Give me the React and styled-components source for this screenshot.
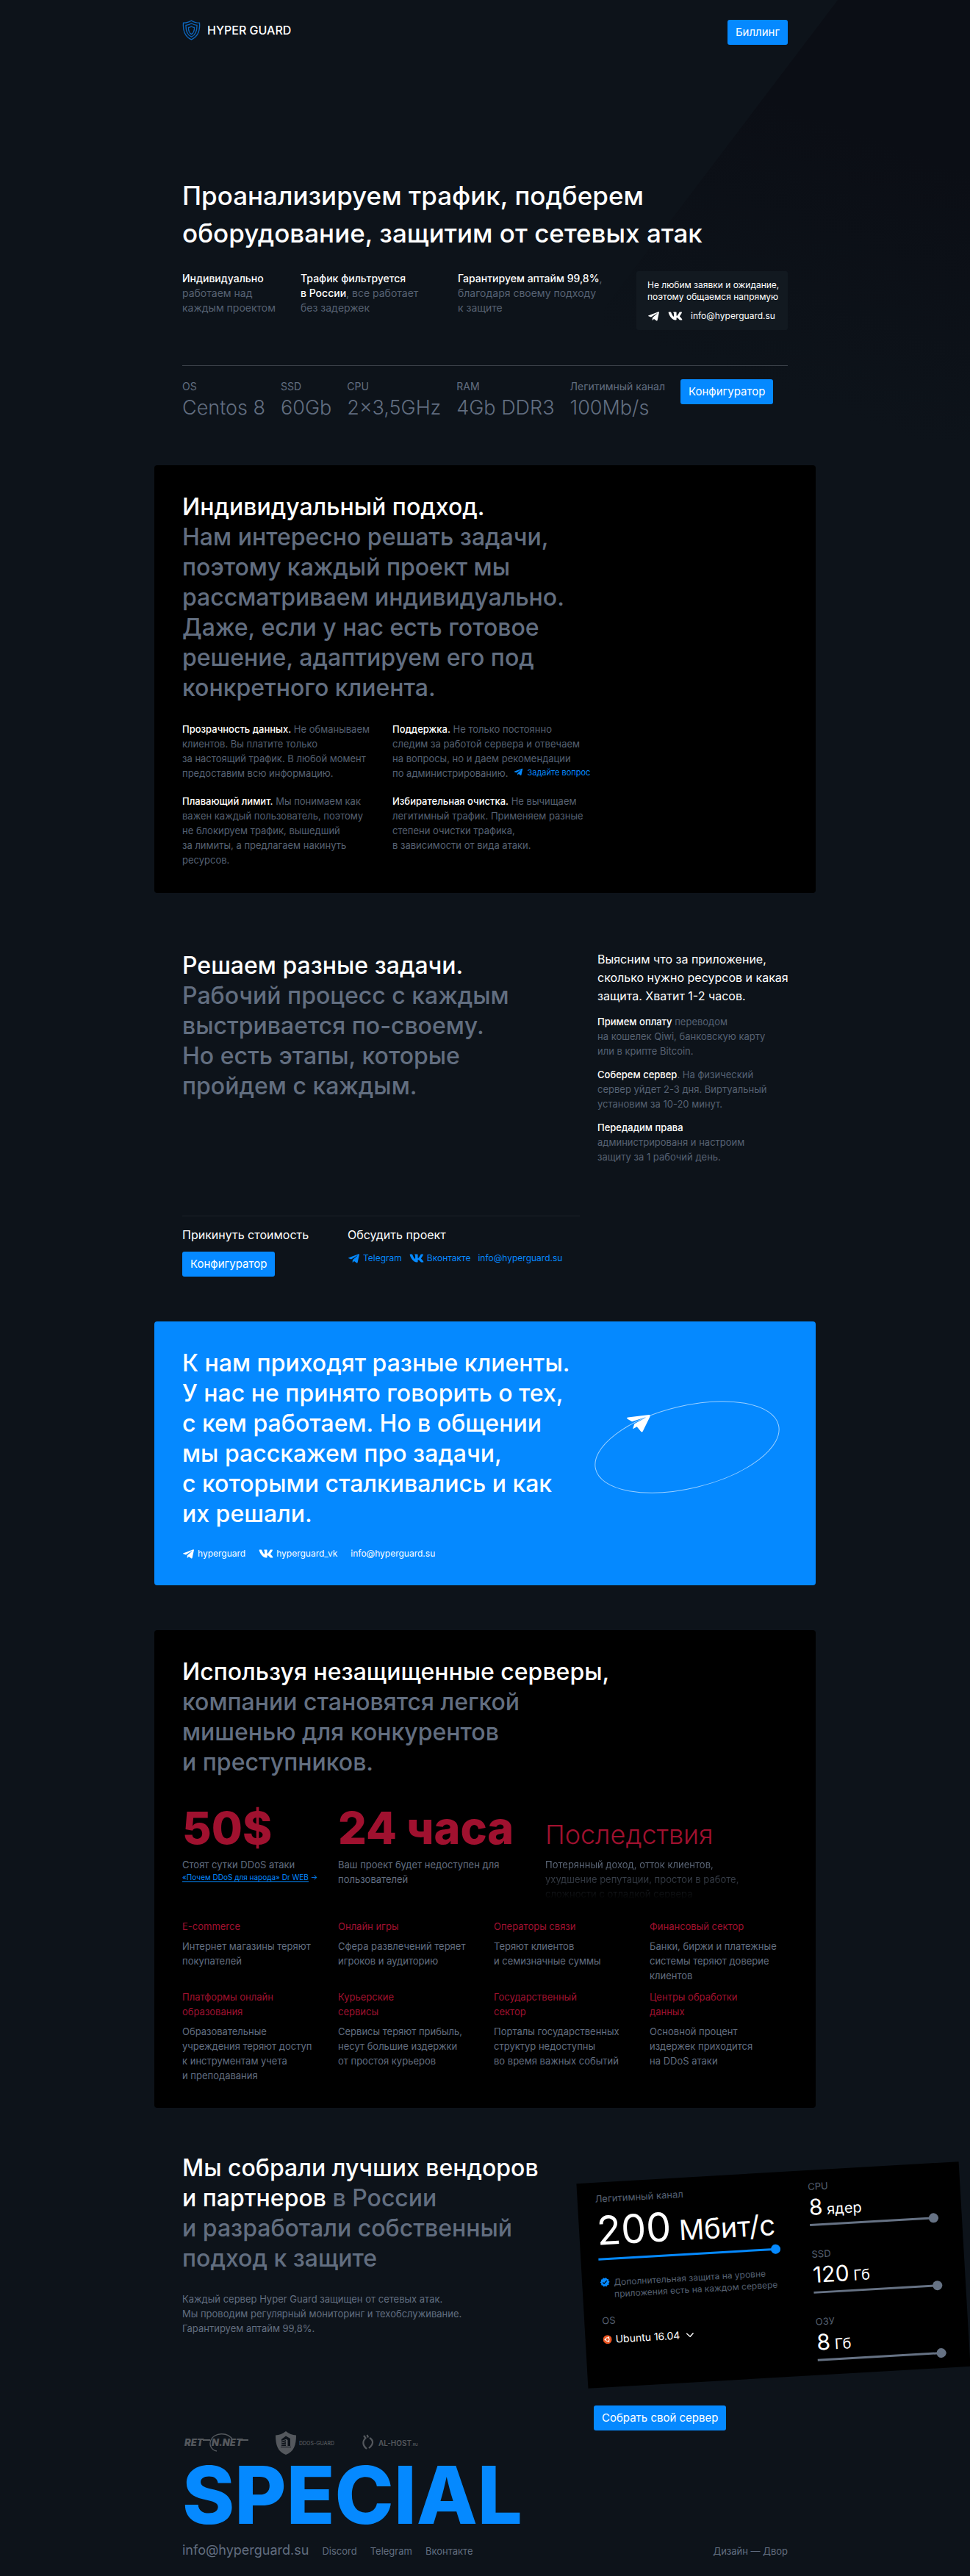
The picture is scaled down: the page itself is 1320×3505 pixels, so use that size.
import React from "react";
import styled, { createGlobalStyle } from "styled-components";
import { FaTelegramPlane, FaVk } from "react-icons/fa";
import { MdVerified } from "react-icons/md";
import { FiChevronDown } from "react-icons/fi";

const color = {
  page: "#0d131a",
  panel: "#000000",
  card: "#121920",
  blue: "#0589ff",
  text: "#ffffff",
  muted: "#626e80",
  soft: "#566172",
  red: "#a0112f",
  line: "#3d434b",
};

const GlobalStyle = createGlobalStyle`
  *, *::before, *::after { box-sizing: border-box; }
  body {
    margin: 0;
    background: ${color.page};
    color: ${color.text};
    font-family: Inter, "Noto Sans", sans-serif;
    font-size: 13px;
    line-height: 20px;
  }
  h1, h2, h3, p, dl, dt, dd { margin: 0; font-weight: inherit; font-size: inherit; }
  a { color: inherit; text-decoration: none; }
  button, select, input { font: inherit; }
`;

const Page = styled.div`
  position: relative;
  overflow: hidden;
`;

const Wedge = styled.div`
  position: absolute;
  top: 0;
  right: 0;
  width: 500px;
  height: 600px;
  clip-path: polygon(320px 0, 100% 0, 100% 100%, 0 100%, 0 422px);
  background: linear-gradient(200deg, #0b0e15 30%, ${color.page} 80%);
`;

const Shell = styled.div`
  position: relative;
  max-width: 900px;
  margin: 0 auto;
`;

const Section = styled.section`
  padding: 0 38px;
`;

const Panel = styled.section`
  margin-top: ${(p) => p.$gap || 61}px;
  padding: 36px 38px ${(p) => p.$bottom || 35}px;
  border-radius: 4px;
  background: ${(p) => (p.$blue ? color.blue : color.panel)};
`;

const Header = styled.header`
  display: flex;
  justify-content: space-between;
  align-items: flex-start;
  padding: 27px 38px 0;
`;

const Brand = styled.a`
  display: flex;
  align-items: center;
  gap: 9px;
  font-size: 16px;
  font-weight: 500;
`;

const Button = styled.button`
  height: 34px;
  padding: 0 11px;
  border: 0;
  border-radius: 3px;
  background: ${color.blue};
  color: ${color.text};
  font-size: 15px;
  font-weight: 400;
  line-height: 20px;
  white-space: nowrap;
  cursor: pointer;
`;

const HeroTitle = styled.h1`
  margin-top: 180px;
  font-size: 35px;
  font-weight: 500;
  line-height: 51px;
  white-space: pre-line;
`;

const Title = styled.h2`
  font-size: 32px;
  font-weight: 500;
  line-height: 41px;
  color: ${(p) => (p.$bright ? color.text : color.muted)};
  white-space: pre-line;
`;

const Bright = styled.span`
  color: ${color.text};
  font-weight: 500;
`;

const Features = styled.div`
  display: grid;
  grid-template-columns: 161px 214px 1fr 206px;
  margin-top: 26px;
  color: ${color.soft};
  font-size: 14px;
  white-space: pre-line;
`;

const ContactCard = styled.div`
  height: 80px;
  padding: 11px 15px;
  border-radius: 3px;
  background: ${color.card};
  color: ${color.text};
  font-size: 12px;
  line-height: 16px;
  white-space: pre;
`;

const Contacts = styled.div`
  display: flex;
  align-items: center;
  gap: ${(p) => p.$gap}px;
  height: 16px;
  margin-top: ${(p) => p.$top}px;
  color: ${(p) => (p.$blue ? color.blue : color.text)};
  font-size: 12px;
  line-height: 16px;
  white-space: nowrap;
`;

const ContactLink = styled.a`
  display: inline-flex;
  align-items: center;
  gap: 4px;
`;

const Specs = styled.div`
  display: flex;
  align-items: flex-start;
  gap: 21px;
  margin-top: 48px;
  padding-top: 18px;
  border-top: 1px solid ${color.line};
`;

const SpecList = styled.dl`
  display: flex;
  gap: 21px;
  color: ${color.muted};
  white-space: nowrap;
`;

const SpecName = styled.dt`
  font-size: 14px;
  line-height: 20px;
`;

const SpecValue = styled.dd`
  margin-top: 3px;
  font-size: 27px;
  font-weight: 300;
  line-height: 32px;
`;

const Notes = styled.div`
  display: grid;
  grid-template-columns: 286px 1fr;
  row-gap: 18px;
  margin-top: 26px;
  color: ${color.soft};
  white-space: pre-line;
`;

const AskLink = styled.a`
  display: inline-flex;
  align-items: center;
  gap: 5px;
  margin-left: 8px;
  color: ${color.blue};
  font-size: 11px;
  line-height: 16px;
`;

const Tasks = styled.section`
  display: grid;
  grid-template-columns: 541px 1fr;
  column-gap: 24px;
  margin-top: 78px;
  padding: 0 38px;
`;

const TasksMain = styled.div`
  display: flex;
  flex-direction: column;
  gap: 156px;
`;

const Actions = styled.div`
  display: grid;
  grid-template-columns: 225px 1fr;
  padding-top: 13px;
  border-top: 1px solid #1b2027;
`;

const ActionTitle = styled.h3`
  margin-bottom: 11px;
  font-size: 16px;
  line-height: 24px;
`;

const Steps = styled.div`
  display: flex;
  flex-direction: column;
  gap: 12px;
  color: ${color.soft};
  white-space: pre;
`;

const Lead = styled.p`
  color: ${color.text};
  font-size: 16px;
  line-height: 25px;
`;

const ClientsBody = styled.div`
  display: grid;
  grid-template-columns: 1fr 252px;
  column-gap: 20px;
  align-items: center;
  padding-right: 11px;
`;

const OrbitBox = styled.div`
  padding-top: 24px;
  svg { display: block; }
`;

const Figures = styled.div`
  display: grid;
  grid-template-columns: 212px 282px 1fr;
  align-items: baseline;
  row-gap: 8px;
  margin-top: 37px;
  color: ${color.muted};
  white-space: pre-line;
`;

const Figure = styled.p`
  color: ${color.red};
  font-size: ${(p) => (p.$light ? 36 : 61)}px;
  font-weight: ${(p) => (p.$light ? 300 : 800)};
  line-height: ${(p) => (p.$light ? 40 : 64)}px;
`;

const Faded = styled.p`
  mask-image: linear-gradient(#000 10%, transparent 95%);
`;

const SourceLink = styled.a`
  display: block;
  color: ${color.blue};
  font-size: 10px;
  line-height: 14px;
  white-space: nowrap;
  span { border-bottom: 1px solid ${color.blue}; }
`;

const Sectors = styled.div`
  display: grid;
  grid-template-columns: repeat(3, 212px) 1fr;
  row-gap: 9px;
  margin-top: 24px;
  color: ${color.muted};
  white-space: pre-line;
`;

const SectorName = styled.h3`
  margin-bottom: 7px;
  color: ${color.red};
`;

const Partners = styled.section`
  display: grid;
  grid-template-columns: 544px 521px;
  margin-top: 61px;
  padding-left: 38px;
  white-space: pre-line;
`;

const PartnersText = styled.p`
  margin-top: 25px;
  color: ${color.muted};
`;

const ServerCard = styled.form`
  display: grid;
  grid-template-columns: 248px 175px;
  column-gap: 42px;
  height: 279px;
  margin: 27px 0 38px;
  padding: 14px 24px;
  background: ${color.panel};
  transform: rotate(-3.3deg);
`;

const BuildRow = styled.div`
  padding-left: 16px;
`;

const Control = styled.label`
  display: flex;
  flex-direction: column;
  color: ${color.soft};
  line-height: 16px;
  white-space: nowrap;
`;

const Reading = styled.span`
  margin: ${(p) => (p.$big ? "6px 0 2px" : "4px 0 2px")};
  color: ${color.text};
  font-size: ${(p) => (p.$big ? 54 : 30)}px;
  line-height: ${(p) => (p.$big ? 60 : 32)}px;
  small { font-size: ${(p) => (p.$big ? 38 : 20)}px; line-height: 1; }
`;

const Slider = styled.input`
  appearance: none;
  width: 100%;
  height: 13px;
  margin: 0;
  background: linear-gradient(${(p) => p.$tone}, ${(p) => p.$tone}) center / 100% 3px no-repeat;
  &::-webkit-slider-thumb {
    appearance: none;
    width: 13px;
    height: 13px;
    border-radius: 50%;
    background: ${(p) => p.$tone};
  }
`;

const SideControls = styled.div`
  display: flex;
  flex-direction: column;
  gap: 25px;
`;

const Protection = styled.p`
  display: flex;
  gap: 5px;
  margin: 18px 0 19px;
  color: ${color.soft};
  font-size: 12px;
  line-height: 16px;
  white-space: pre;
  svg { color: ${color.blue}; }
`;

const SelectRow = styled.span`
  display: flex;
  align-items: center;
  gap: 5px;
  margin-top: 8px;
  color: ${color.text};
`;

const OsSelect = styled.select`
  appearance: none;
  height: 20px;
  padding: 0;
  border: 0;
  background: transparent;
  color: ${color.text};
  font-size: 14px;
  line-height: 20px;
`;

const Logos = styled.div`
  display: flex;
  align-items: center;
  gap: 36px;
  height: 34px;
  svg { display: block; }
`;

const Special = styled.p`
  margin-top: 4px;
  color: ${color.blue};
  font-size: 108px;
  font-weight: 800;
  line-height: 100px;
`;

const Footer = styled.footer`
  display: flex;
  align-items: baseline;
  gap: 18px;
  padding: 13px 38px 23px;
  color: ${color.muted};
  font-size: 13px;
  line-height: 24px;
`;

const FooterMail = styled.a`
  font-size: 18px;
`;

const Credit = styled.a`
  margin-left: auto;
`;

function Shield() {
  return (
    <svg width="25" height="28" viewBox="0 0 25 28" fill="none" stroke="#0d66bd" strokeWidth="1.3" aria-hidden="true">
      <path d="M12.5 1C9.5 3.2 5.5 4.2 1.5 4.2C.8 13 2.5 22.5 12.5 26.8C22.5 22.5 24.2 13 23.5 4.2C19.5 4.2 15.5 3.2 12.5 1Z" />
      <path d="M12.5 4.8C10.3 6.3 7.8 7.1 5 7.3C4.8 13.5 6 20 12.5 23.2C19 20 20.2 13.5 20 7.3C17.2 7.1 14.7 6.3 12.5 4.8Z" />
      <path d="M12.5 9C11.2 9.9 9.9 10.3 8.5 10.5C8.4 14.3 9.2 17.7 12.5 19.6C15.8 17.7 16.6 14.3 16.5 10.5C15.1 10.3 13.8 9.9 12.5 9Z" />
    </svg>
  );
}

function Orbit() {
  return (
    <svg width="252" height="126" viewBox="0 0 252 126" aria-hidden="true" overflow="visible">
      <ellipse cx="126" cy="63" rx="128" ry="56" transform="rotate(-13.5 126 63)" fill="none" stroke="#fff" strokeOpacity=".6" />
      <path
        fill="#fff"
        transform="translate(48 8) rotate(14) scale(.067)"
        d="M446.7 98.6l-67.6 318.8c-5.1 22.5-18.4 28.1-37.3 17.5l-103-75.9-49.7 47.8c-5.5 5.5-10.1 10.1-20.7 10.1l7.4-104.9 190.9-172.5c8.3-7.4-1.8-11.5-12.9-4.1L117.8 284 16.2 252.2c-22.1-6.9-22.5-22.1 4.6-32.7L418.2 66.4c18.4-6.9 34.5 4.1 28.5 32.2z"
      />
    </svg>
  );
}

function UbuntuMark() {
  return (
    <svg width="12" height="12" viewBox="0 0 12 12" aria-hidden="true">
      <circle cx="6" cy="6" r="6" fill="#e95420" />
      <circle cx="6" cy="6" r="2.4" fill="none" stroke="#fff" />
      <circle cx="2.7" cy="6" r=".9" fill="#fff" />
      <circle cx="7.7" cy="3.2" r=".9" fill="#fff" />
      <circle cx="7.7" cy="8.8" r=".9" fill="#fff" />
    </svg>
  );
}

const LogoText = styled.text`
  fill: #54585d;
  font-family: Inter, sans-serif;
  font-size: ${(p) => p.$size}px;
  font-weight: ${(p) => p.$weight || 600};
  font-style: ${(p) => (p.$slanted ? "italic" : "normal")};
`;

function PartnerLogos() {
  return (
    <Logos>
      <svg width="91" height="34" viewBox="0 0 91 34" role="img" aria-label="RETN.NET">
        <LogoText $size="13" $weight="900" $slanted x="3" y="21">RET</LogoText>
        <LogoText $size="13" $weight="900" $slanted x="40" y="21">N.NET</LogoText>
        <path d="M28 13H38M78 13H90" stroke="#54585d" strokeWidth="2" />
        <path d="M47 28C40 27 36 20 39 13C43 3 62 1 69 13" fill="none" stroke="#54585d" strokeWidth="1.4" />
      </svg>
      <svg width="80" height="34" viewBox="0 0 80 34" role="img" aria-label="DDOS-GUARD">
        <path fill="#54585d" d="M14 1C10 4.5 5 6 0 6.5C0 20 3 29 14 33C25 29 28 20 28 6.5C23 6 18 4.5 14 1Z" />
        <path fill="#0d131a" d="M8 21V12L14 7.5L20 11V21H16.5V13L14 11.5V21ZM7 22H21V23H7Z" />
        <path stroke="#54585d" d="M8 14.5L14 12.5M8 17L14 15.5M8 19.5L14 18.5" />
        <LogoText $size="7" $weight="500" x="32" y="20">DDOS-GUARD</LogoText>
      </svg>
      <svg width="86" height="34" viewBox="0 0 86 34" role="img" aria-label="AL-HOST.RU">
        <path d="M7 10C2 14 2 20 8 25M12 10C18 14 17 19 11 24M4 7L7 11M8.5 6L10 9.5" fill="none" stroke="#54585d" strokeWidth="2.2" />
        <LogoText $size="10" x="24" y="21">AL-HOST<tspan fontSize="5">.RU</tspan></LogoText>
      </svg>
    </Logos>
  );
}

const specs = [
  ["OS", "Centos 8"],
  ["SSD", "60Gb"],
  ["CPU", "2×3,5GHz"],
  ["RAM", "4Gb DDR3"],
  ["Легитимный канал", "100Mb/s"],
];

const sectors = [
  ["E-commerce", "Интернет магазины теряют\nпокупателей"],
  ["Онлайн игры", "Сфера развлечений теряет\nигроков и аудиторию"],
  ["Операторы связи", "Теряют клиентов\nи семизначные суммы"],
  ["Финансовый сектор", "Банки, биржи и платежные\nсистемы теряют доверие\nклиентов"],
  ["Платформы онлайн\nобразования", "Образовательные\nучреждения теряют доступ\nк инструментам учета\nи преподавания"],
  ["Курьерские\nсервисы", "Сервисы теряют прибыль,\nнесут большие издержки\nот простоя курьеров"],
  ["Государственный\nсектор", "Порталы государственных\nструктур недоступны\nво время важных событий"],
  ["Центры обработки\nданных", "Основной процент\nиздержек приходится\nна DDoS атаки"],
];

const resources = [
  ["CPU", "8", "ядер"],
  ["SSD", "120", "Гб"],
  ["ОЗУ", "8", "Гб"],
];

export default function App() {
  return (
    <Page>
      <GlobalStyle />
      <Wedge />
      <Shell>
        <Header>
          <Brand href="#top"><Shield />HYPER GUARD</Brand>
          <Button type="button">Биллинг</Button>
        </Header>

        <Section>
          <HeroTitle>{"Проанализируем трафик, подберем\nоборудование, защитим от сетевых атак"}</HeroTitle>
          <Features>
            <p><Bright>Индивидуально</Bright>{"\nработаем над\nкаждым проектом"}</p>
            <p><Bright>{"Трафик фильтруется\nв России"}</Bright>{", все работает\nбез задержек"}</p>
            <p><Bright>Гарантируем аптайм 99,8%</Bright>{",\nблагодаря своему подходу\nк защите"}</p>
            <ContactCard>
              <p>{"Не любим заявки и ожидание,\nпоэтому общаемся напрямую"}</p>
              <Contacts $gap={11} $top={10}>
                <ContactLink href="#telegram" aria-label="Telegram"><FaTelegramPlane size={17} /></ContactLink>
                <ContactLink href="#vk" aria-label="Вконтакте"><FaVk size={20} /></ContactLink>
                <ContactLink href="#mail">info@hyperguard.su</ContactLink>
              </Contacts>
            </ContactCard>
          </Features>
          <Specs>
            <SpecList>
              {specs.map(([name, value]) => (
                <div key={name}>
                  <SpecName>{name}</SpecName>
                  <SpecValue>{value}</SpecValue>
                </div>
              ))}
            </SpecList>
            <Button type="button">Конфигуратор</Button>
          </Specs>
        </Section>

        <Panel $gap={62}>
          <Title>
            <Bright>Индивидуальный подход.</Bright>
            {"\nНам интересно решать задачи,\nпоэтому каждый проект мы\nрассматриваем индивидуально.\nДаже, если у нас есть готовое\nрешение, адаптируем его под\nконкретного клиента."}
          </Title>
          <Notes>
            <p><Bright>Прозрачность данных.</Bright>{" Не обманываем\nклиентов. Вы платите только\nза настоящий трафик. В любой момент\nпредоставим всю информацию."}</p>
            <p>
              <Bright>Поддержка.</Bright>{" Не только постоянно\nследим за работой сервера и отвечаем\nна вопросы, но и даем рекомендации\nпо администрированию."}
              <AskLink href="#ask"><FaTelegramPlane size={13} />Задайте вопрос</AskLink>
            </p>
            <p><Bright>Плавающий лимит.</Bright>{" Мы понимаем как\nважен каждый пользователь, поэтому\nне блокируем трафик, вышедший\nза лимиты, а предлагаем накинуть\nресурсов."}</p>
            <p><Bright>Избирательная очистка.</Bright>{" Не вычищаем\nлегитимный трафик. Применяем разные\nстепени очистки трафика,\nв зависимости от вида атаки."}</p>
          </Notes>
        </Panel>

        <Tasks>
          <TasksMain>
            <Title>
              <Bright>Решаем разные задачи.</Bright>
              {"\nРабочий процесс с каждым\nвыстривается по-своему.\nНо есть этапы, которые\nпройдем с каждым."}
            </Title>
            <Actions>
              <div>
                <ActionTitle>Прикинуть стоимость</ActionTitle>
                <Button type="button">Конфигуратор</Button>
              </div>
              <div>
                <ActionTitle>Обсудить проект</ActionTitle>
                <Contacts $gap={10} $top={12} $blue>
                  <ContactLink href="#telegram"><FaTelegramPlane size={17} />Telegram</ContactLink>
                  <ContactLink href="#vk"><FaVk size={20} />Вконтакте</ContactLink>
                  <ContactLink href="#mail">info@hyperguard.su</ContactLink>
                </Contacts>
              </div>
            </Actions>
          </TasksMain>
          <Steps>
            <Lead>{"Выясним что за приложение,\nсколько нужно ресурсов и какая\nзащита. Хватит 1-2 часов."}</Lead>
            <p><Bright>Примем оплату</Bright>{" переводом\nна кошелек Qiwi, банковскую карту\nили в крипте Bitcoin."}</p>
            <p><Bright>Соберем сервер</Bright>{". На физический\nсервер уйдет 2-3 дня. Виртуальный\nустановим за 10-20 минут."}</p>
            <p><Bright>Передадим права</Bright>{"\nадминистрированя и настроим\nзащиту за 1 рабочий день."}</p>
          </Steps>
        </Tasks>

        <Panel $blue>
          <ClientsBody>
            <Title $bright>
              {"К нам приходят разные клиенты.\nУ нас не принято говорить о тех,\nс кем работаем. Но в общении\nмы расскажем про задачи,\nс которыми сталкивались и как\nих решали."}
            </Title>
            <OrbitBox><Orbit /></OrbitBox>
          </ClientsBody>
          <Contacts $gap={18} $top={26}>
            <ContactLink href="#telegram"><FaTelegramPlane size={17} />hyperguard</ContactLink>
            <ContactLink href="#vk"><FaVk size={20} />hyperguard_vk</ContactLink>
            <ContactLink href="#mail">info@hyperguard.su</ContactLink>
          </Contacts>
        </Panel>

        <Panel $bottom={34}>
          <Title>
            <Bright>Используя незащищенные серверы,</Bright>
            {"\nкомпании становятся легкой\nмишенью для конкурентов\nи преступников."}
          </Title>
          <Figures>
            <Figure>50$</Figure>
            <Figure>24 часа</Figure>
            <Figure $light>Последствия</Figure>
            <div>
              <p>Стоят сутки DDoS атаки</p>
              <SourceLink href="#drweb"><span>«Почем DDoS для народа» Dr WEB</span> →</SourceLink>
            </div>
            <p>{"Ваш проект будет недоступен для\nпользователей"}</p>
            <Faded>{"Потерянный доход, отток клиентов,\nухудшение репутации, простои в работе,\nсложности с отладкой сервера"}</Faded>
          </Figures>
          <Sectors>
            {sectors.map(([name, text]) => (
              <div key={name}>
                <SectorName>{name}</SectorName>
                <p>{text}</p>
              </div>
            ))}
          </Sectors>
        </Panel>

        <Partners>
          <div>
            <Title>
              <Bright>{"Мы собрали лучших вендоров\nи партнеров"}</Bright>
              {" в России\nи разработали собственный\nподход к защите"}
            </Title>
            <PartnersText>{"Каждый сервер Hyper Guard защищен от сетевых атак.\nМы проводим регулярный мониторинг и техобслуживание.\nГарантируем аптайм 99,8%."}</PartnersText>
          </div>
          <div>
            <ServerCard>
              <div>
                <Control>
                  Легитимный канал
                  <Reading $big>200<small> Мбит/с</small></Reading>
                  <Slider type="range" defaultValue="100" $tone={color.blue} />
                </Control>
                <Protection><MdVerified size={14} />{"Дополнительная защита на уровне\nприложения есть на каждом сервере"}</Protection>
                <Control>
                  OS
                  <SelectRow>
                    <UbuntuMark />
                    <OsSelect><option>Ubuntu 16.04</option></OsSelect>
                    <FiChevronDown size={17} />
                  </SelectRow>
                </Control>
              </div>
              <SideControls>
                {resources.map(([name, value, unit]) => (
                  <Control key={name}>
                    {name}
                    <Reading>{value}<small> {unit}</small></Reading>
                    <Slider type="range" defaultValue="100" $tone="#667284" />
                  </Control>
                ))}
              </SideControls>
            </ServerCard>
            <BuildRow><Button type="button">Собрать свой сервер</Button></BuildRow>
          </div>
        </Partners>

        <Section>
          <PartnerLogos />
          <Special>SPECIAL</Special>
        </Section>

        <Footer>
          <FooterMail href="#mail">info@hyperguard.su</FooterMail>
          <a href="#discord">Discord</a>
          <a href="#telegram">Telegram</a>
          <a href="#vk">Вконтакте</a>
          <Credit href="#dvor">Дизайн — Двор</Credit>
        </Footer>
      </Shell>
    </Page>
  );
}
